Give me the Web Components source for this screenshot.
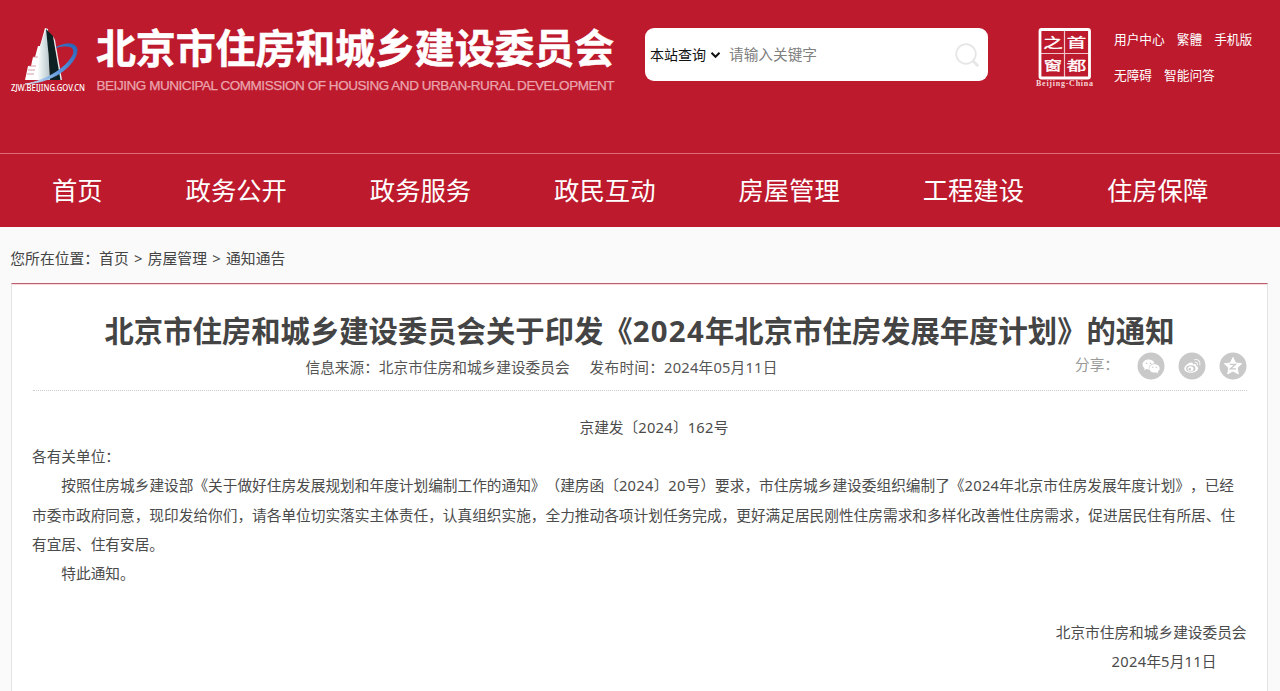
<!DOCTYPE html>
<html lang="zh-CN">
<head>
<meta charset="utf-8">
<title>北京市住房和城乡建设委员会</title>
<style>
html,body{margin:0;padding:0}
body{background:#fafafa;height:691px;overflow:hidden;font-family:"Noto Sans","Noto Sans CJK SC",sans-serif;font-size:14.68px;color:#444;text-spacing-trim:space-all}
</style>
</head>
<body>
<gov-page></gov-page>
<script>
const define=(name,html)=>customElements.define(name,class extends HTMLElement{
  constructor(){super();const t=document.createElement('template');t.innerHTML=html;this.attachShadow({mode:'open'}).append(t.content.cloneNode(true));}
});

define('site-brand',`<style>
:host{display:flex;width:635px;height:100px;box-sizing:border-box;padding-left:8px}
svg{flex:none;display:block}
.names{padding:15px 0 0 8px;white-space:nowrap;color:#fff}
.cn{font:700 40px/62px "Noto Sans CJK SC",sans-serif;letter-spacing:-.15px;height:62px;-webkit-text-stroke:.5px #fff}
.en{font:13.5px/18px "Liberation Sans",sans-serif;letter-spacing:-.45px;color:#eaa5ad;-webkit-text-stroke:.25px #eaa5ad;margin-left:.5px}
</style>
<svg width="80" height="100" viewBox="8 0 80 100">
<defs><linearGradient id="o" x1="0" y1="1" x2="1" y2="0"><stop offset="0" stop-color="#d9e8fa"/><stop offset=".5" stop-color="#5a96de"/><stop offset="1" stop-color="#2262b8"/></linearGradient>
<linearGradient id="w"><stop offset="0" stop-color="#fff"/><stop offset="1" stop-color="#b4c6ca"/></linearGradient></defs>
<path d="M25 80L28 66H31L33 57H35L38 46H40L45 28L48 29L50 80Z" fill="#fff"/>
<path d="M37 80L40 46L46 29L48 45L50 80Z" fill="url(#w)"/>
<path d="M46 29L53 36L61.500 80H50L48.500 54Z" fill="#0d2022"/>
<path d="M53 36L55 40L62 80H60.500Z" fill="#e8efef"/>
<path d="M29 66H36M28 70H35M27 74H34M33 57H38" stroke="#c8848b" stroke-width=".8"/>
<path d="M25 84C46 81 66 68 73 55C76 47 69 44 56 47.500C68 41 80 43 76.500 54C71 70 49 83 25 84Z" fill="url(#o)" stroke="url(#o)" stroke-width=".8"/>
<text x="11" y="91" textLength="74" lengthAdjust="spacingAndGlyphs" font-family="Noto Sans,sans-serif" font-weight="500" font-size="8" fill="#fff">ZJW.BEIJING.GOV.CN</text>
</svg>
<div class="names"><div class="cn">北京市住房和城乡建设委员会</div><div class="en">BEIJING MUNICIPAL COMMISSION OF HOUSING AND URBAN-RURAL DEVELOPMENT</div></div>`);

define('site-search',`<style>
:host{display:flex;align-items:center;box-sizing:border-box;width:343px;height:53px;margin:28px 0 0 10px;padding:0 8px 0 5px;background:#fff;border-radius:9px;font-size:14px;white-space:nowrap}
span{padding-bottom:2px}
.scope{color:#111}.hint{color:#808080;margin-left:8px;flex:1;font-size:14.68px}
svg{flex:none}.c{margin-left:4px}
</style><span class="scope">本站查询</span>
<svg class="c" width="11" height="8" viewBox="0 0 11 8"><path d="M1.500 1.800L5.500 5.800L9.500 1.800" fill="none" stroke="#111" stroke-width="2"/></svg>
<span class="hint">请输入关键字</span>
<svg width="26" height="26" viewBox="0 0 26 26" fill="none" stroke="#e6e6e6"><circle cx="12" cy="12" r="9.800" stroke-width="1.800"/><path d="M19 19L23.500 23.500" stroke-width="2.600" stroke-linecap="round"/></svg>`);

define('capital-seal',`<style>:host{display:block;margin:26px 0 0 45px;width:64px;height:64px}svg{display:block}</style>
<svg width="64" height="64" viewBox="1033 26 64 64">
<rect x="1040" y="29.500" width="49.500" height="48.500" rx="1.500" fill="none" stroke="#fff" stroke-width="2.800"/>
<path d="M1064.500 31V77M1041 53.500H1089" stroke="#fff" stroke-opacity=".75" stroke-width="1.200"/>
<g font-family="Noto Sans CJK SC,sans-serif" font-weight="400" font-size="18" fill="#fff" stroke="#fff" stroke-width=".45" text-anchor="middle">
<text transform="translate(1053 47) scale(1.080 .7)">之</text><text transform="translate(1076.500 47) scale(1.080 .7)">首</text>
<text transform="translate(1053 70) scale(1.020 .72)">窗</text><text transform="translate(1076.500 70) scale(1.080 .72)">都</text></g>
<text x="1036" y="86" textLength="57" font-family="Liberation Serif,serif" font-weight="700" font-size="8" fill="#f6d5d8">Beijing-China</text>
</svg>`);

define('quick-links',`<style>:host{display:block;margin:21px 0 0 17px;font-size:12.7px;line-height:36px;color:#fff;white-space:nowrap}div{display:flex;gap:12px}</style>
<div><span>用户中心</span><span>繁體</span><span>手机版</span></div><div><span>无障碍</span><span>智能问答</span></div>`);

define('main-nav',`<style>:host{display:flex;gap:82.900px;box-sizing:border-box;height:74px;padding-left:52px;border-top:1px solid #db6e7a;color:#fff;font-size:25.350px;line-height:73px;white-space:nowrap}</style>
<span>首页</span><span>政务公开</span><span>政务服务</span><span>政民互动</span><span>房屋管理</span><span>工程建设</span><span>住房保障</span>`);

define('site-header',`<style>:host{display:block;height:227px;background:#bd1a2d}.top{display:flex;height:153px}</style>
<div class="top"><site-brand></site-brand><site-search></site-search><capital-seal></capital-seal><quick-links></quick-links></div><main-nav></main-nav>`);

define('crumb-trail',`<style>:host{display:flex;gap:5.300px;height:56px;padding-left:10.300px;line-height:63px;color:#444;font-size:14.800px;white-space:nowrap}</style>
<span>您所在位置：<slot></slot></span><span>&gt;</span><span>房屋管理</span><span>&gt;</span><span>通知通告</span>`);

define('share-bar',`<style>:host{display:flex;align-items:center;height:28px;margin-top:1px;color:#999;white-space:nowrap}svg{margin-left:13px}span{margin-right:4.500px;padding-bottom:5px}</style>
<span>分享：</span>
<svg width="28" height="28" viewBox="0 0 28 28"><circle cx="14" cy="14" r="13.500" fill="#c9c9c9"/><path d="M11.500 7.500c-3.300 0-6 2.200-6 5 0 1.500.8 2.800 2.100 3.700l-.6 2 2.200-1.100c.7.200 1.500.3 2.300.3h.5c-.8-3.500 2-6 5.600-6-.7-2.300-3.100-3.900-6.100-3.900z" fill="#fff"/><path d="M17.500 12.200c-2.900 0-5.200 1.900-5.200 4.200s2.300 4.200 5.200 4.200c.6 0 1.200-.1 1.700-.2l2 1-.5-1.800c1.200-.8 2-1.900 2-3.200 0-2.300-2.300-4.200-5.200-4.200z" fill="#fff"/><g fill="#c9c9c9"><circle cx="9.500" cy="11.300" r=".8"/><circle cx="13.500" cy="11.300" r=".8"/><circle cx="15.800" cy="15.300" r=".7"/><circle cx="19.200" cy="15.300" r=".7"/></g></svg>
<svg width="28" height="28" viewBox="0 0 28 28"><circle cx="14" cy="14" r="13.500" fill="#c9c9c9"/><path d="M12 10.700c-1.800.3-5.700 3.400-5.700 6 0 2.400 3 4 6.600 4 4.200 0 7.300-2.300 7.300-4.500 0-1.300-1.100-2-2.100-2.300.5-1.500-.3-2.600-3.200-1.500.4-1.500-.8-2.200-2.900-1.700z" fill="#fff"/><ellipse cx="12.800" cy="16.500" rx="4.700" ry="3.200" fill="#c9c9c9"/><ellipse cx="12.500" cy="16.700" rx="3" ry="2.500" fill="#fff"/><circle cx="11.800" cy="17.200" r="1.200" fill="#c9c9c9"/><path d="M16.500 7.700c3.500-.8 6.300 1.800 5.400 5.500M17 10.300c1.700-.3 2.900.8 2.500 2.500" fill="none" stroke="#fff" stroke-opacity=".8" stroke-width="1.100" stroke-linecap="round"/></svg>
<svg width="28" height="28" viewBox="0 0 28 28"><circle cx="14" cy="14" r="13.500" fill="#c9c9c9"/><path d="M14 5.500l2.600 5.500 6 .7-4.400 4.200 1.100 6L14 19l-5.300 2.900 1.100-6-4.400-4.200 6-.7z" fill="#fff" stroke="#fff" stroke-linejoin="round"/><path d="M10.800 12.300h5.600l-5 4.500h5.600" fill="none" stroke="#c9c9c9" stroke-width="1.300"/></svg>`);

define('article-head',`<style>:host{display:block;height:107px;box-sizing:border-box;border-bottom:1px dotted #ccc}
h1{margin:0;padding-top:24px;font-size:29.350px;line-height:46px;color:#444;text-align:center;white-space:nowrap}
i{font-style:normal;letter-spacing:1.300px}.row{display:flex;justify-content:space-between;height:28px;margin-top:-3px}.meta{display:flex;gap:20px;padding-left:273px;line-height:32px;white-space:nowrap;color:#555}
.d{letter-spacing:.22px}
</style><h1>北京市住房和城乡建设委员会关于印发《<i>2024</i>年北京市住房发展年度计划》的通知</h1>
<div class="row"><div class="meta"><span>信息来源：北京市住房和城乡建设委员会</span><span class="d">发布时间：2024年05月11日</span></div><share-bar></share-bar></div>`);

define('article-body',`<style>:host{display:block;padding-top:21.500px;line-height:29.350px;color:#4b4b4b;margin-left:-.5px}
p{margin:0;white-space:nowrap}.in{text-indent:2em}.no{padding-left:547.500px}.sig{text-align:right;padding-top:29.350px}.date{text-align:right;padding-right:30px}i{font-style:normal;letter-spacing:.3px}</style>
<p class="no">京建发〔<i>2024</i>〕<i>162</i>号</p>
<p>各有关单位：</p>
<p class="in">按照住房城乡建设部《关于做好住房发展规划和年度计划编制工作的通知》（建房函〔<i>2024</i>〕<i>20</i>号）要求，市住房城乡建设委组织编制了《<i>2024</i>年北京市住房发展年度计划》，已经</p>
<p>市委市政府同意，现印发给你们，请各单位切实落实主体责任，认真组织实施，全力推动各项计划任务完成，更好满足居民刚性住房需求和多样化改善性住房需求，促进居民住有所居、住</p>
<p>有宜居、住有安居。</p>
<p class="in">特此通知。</p>
<p class="sig">北京市住房和城乡建设委员会</p>
<p class="date"><i>2024</i>年<i>5</i>月<i>11</i>日</p>`);

define('notice-article',`<style>:host{display:block;box-sizing:border-box;width:1257px;height:420px;margin-left:11px;padding:0 20.500px;background:#fff;border:1px solid #e3e3e3;border-top-color:#b5606a;box-shadow:inset 0 1px #f9d9dd}</style><article-head></article-head><article-body></article-body>`);

define('gov-page',`<style>:host{display:block;width:1280px;height:691px;overflow:hidden}</style><site-header></site-header><crumb-trail>首页</crumb-trail><notice-article></notice-article>`);
</script>
</body>
</html>
